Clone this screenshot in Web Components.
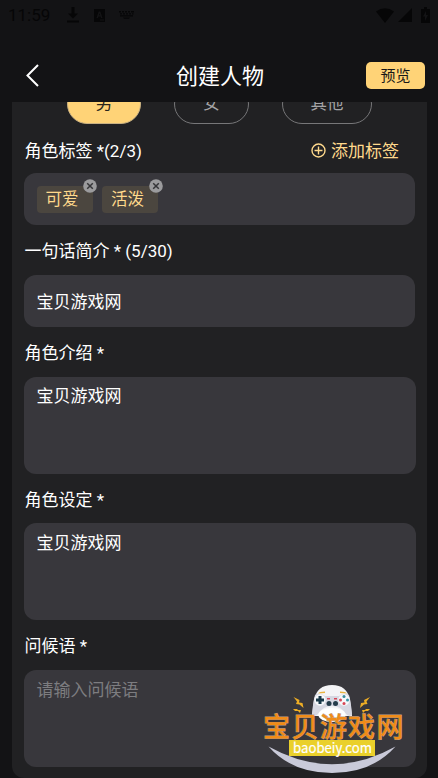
<!DOCTYPE html>
<html lang="zh-CN">
<head>
<meta charset="utf-8">
<title>创建人物</title>
<style>
html,body{margin:0;height:100%;background:#131315;overflow:hidden}
body{font-family:Roboto,"Noto Sans CJK SC",sans-serif;color:#fff}
</style>
</head>
<body>
<create-page></create-page>
<script>
const define = (name, html) => {
  const t = document.createElement('template');
  t.innerHTML = html;
  customElements.define(name, class extends HTMLElement {
    constructor() {
      super();
      this.attachShadow({mode: 'open'}).append(t.content.cloneNode(true));
    }
  });
};

define('status-bar', `
<style>
:host{display:flex;height:30px;box-sizing:border-box;padding:0 6px 0 8px;align-items:center;color:#060607;font-size:17px;line-height:30px}
.time{width:59px}
svg{display:block;fill:currentColor}
.space{flex:1}
</style>
<span class="time">11:59</span>
<svg width="12" height="16" viewBox="0 0 12 16"><path d="M4.500 0h3v6.500H11L6 11.500 1 6.500h3.500zM0 13.500h12v2H0z"/></svg>
<svg style="margin-left:15px" width="11" height="13" viewBox="0 0 11 13"><path fill-rule="evenodd" d="M0 0h11v13H0zM4.700 2.500 2.500 9H4L4.500 7.500H6.500L7 9H8.500L6.300 2.500zM4.900 6.200 5.500 4.300 6.100 6.200zM6 10.500v1h4v-1z"/></svg>
<svg style="margin-left:14px" width="15" height="10" viewBox="0 0 15 10"><path d="M0 1h2v1.500H0zm3 0h2v1.500H3zm3 0h2v1.500H6zm3 0h2v1.500H9zm3 0h3v1.500h-3zM1 3.200h2v1.300H1zm3 0h2v1.300H4zm3 0h2v1.300H7zm3 0h2v1.300h-2zm3 0h1.500v1.300H13zM1 5.200h13v1.300H1zM4 7.500h7l-1 1.200H5z"/></svg>
<span class="space"></span>
<svg width="18" height="15" viewBox="0 0 18 15"><path d="M0 3.500Q9-3 18 3.500L9 15z"/></svg>
<svg style="margin-left:4px" width="14" height="14" viewBox="0 0 14 14"><path d="M14 0v14H0z"/></svg>
<svg style="margin:0 2px 0 9px" width="9" height="16" viewBox="0 0 9 16"><path fill-rule="evenodd" d="M3 0h3v2h3v14H0V2h3zM5 4 2 9.500h2V14l3-6H5z"/></svg>
`);

define('app-header', `
<style>
:host{display:grid;grid-template-columns:73px 1fr 60px;align-items:center;height:72px;box-sizing:border-box;padding:19px 13px 0 26px}
h1{margin:2px 0 0;padding:0 33px 0 9px;font-size:22px;font-weight:400;line-height:30px;text-align:center;white-space:nowrap}
svg{display:block}
button{justify-self:end;width:59px;height:27px;border:0;border-radius:5px;background:#ffd377;color:#171717;padding:0;font:15px/27px Roboto,"Noto Sans CJK SC",sans-serif}
button slot{display:block;padding-top:1px}
</style>
<svg width="13" height="23" viewBox="0 0 13 23" fill="none" stroke="#fff" stroke-width="2"><path d="M12 1 1.500 11.500 12 22"/></svg>
<h1><slot></slot></h1>
<button><slot name="action"></slot></button>
`);

define('choice-pill', `
<style>
:host{display:block;box-sizing:border-box;height:40px;border:1px solid #777779;border-radius:20px;text-align:center;font-size:16.500px;line-height:38px;color:#a5a5a7}
:host([selected]){background:#ffd377;border-color:#c9b182;color:#29251c}
</style><slot></slot>`);

define('field-label', `
<style>
:host{display:flex;justify-content:space-between;align-items:center;height:var(--h,49px);box-sizing:border-box;padding:var(--pt,4px) 16px 0 .5px;font-size:17px;line-height:25px;color:#fff;white-space:pre}
</style><span><slot></slot></span><slot name="action"></slot>`);

define('add-action', `
<style>
:host{display:flex;align-items:center;gap:5px;color:#ffd98c}
svg{margin-top:-1px}
</style>
<svg width="15" height="15" viewBox="0 0 15 15" fill="none" stroke="currentColor" stroke-width="1.400"><circle cx="7.500" cy="7.500" r="6.500"/><path d="M7.500 3.500v8M3.500 7.500h8"/></svg>
<span><slot></slot></span>`);

define('input-box', `
<style>
:host{display:flex;box-sizing:border-box;height:52px;width:391px;align-items:center;padding:2px 12.500px 0;border-radius:12px;background:#38373c;font-size:17px;line-height:25px;color:#fff}
:host([multiline]){height:97px;width:392px;align-items:flex-start;padding-top:7.500px}
:host([placeholder]){color:#7d7d80}
:host([tags]){gap:9.500px;padding-left:12.500px;padding-top:0}
</style><slot></slot>`);

define('tag-chip', `
<style>
:host{display:block;position:relative;width:56px;height:27px;box-sizing:border-box;padding-left:9px;border-radius:4px;background:#4b463f;color:#ffd98c;font-size:16.500px;line-height:27px}
svg{position:absolute;right:-4.500px;top:-7px}
</style><slot></slot>
<svg width="14" height="14" viewBox="0 0 14 14"><circle cx="7" cy="7" r="6.800" fill="#9b9b9d"/><path d="M4.200 4.200l5.600 5.600M9.800 4.200 4.200 9.800" stroke="#353538" stroke-width="1.500"/></svg>`);

define('site-mark', `
<style>
:host{display:block;width:150px;height:98px}
svg{display:block;overflow:visible}
.name{font:500 27px "Noto Sans CJK SC",sans-serif}
.url{font:400 14px "Noto Sans CJK SC",sans-serif}
</style>
<svg width="150" height="98" viewBox="260 680 150 98">
<path d="M268.500 746.500Q332 782 395.500 746.500Q372 773 332 773Q292 773 268.500 746.500Z" fill="#c9cad9"/>
<path d="M314 700Q317 685 332 685Q347 685 350 700L352 716H312Z" fill="#f4f4f6"/>
<path d="M318 693.500q1-2 7-2v1.500zM347 693.500q-1-2-7-2v1.500z" fill="#e9b33f"/>
<path d="M315 695Q319 692 325 696H339Q345 692 349 695Q351 702 352 714Q350 718 346 714Q341 706 332 706Q323 706 318 714Q314 718 312 714Q313 702 315 695Z" fill="#d7d8e2"/>
<ellipse cx="332" cy="715" rx="13.500" ry="7" fill="#fff"/>
<circle cx="320" cy="700" r="5.700" fill="#f7f8fa"/><circle cx="344" cy="700" r="5.700" fill="#f7f8fa"/>
<path d="M318.500 696h3v2.500h2.500v3h-2.500v2.500h-3v-2.500H316v-3h2.500z" fill="#183848"/>
<circle cx="344" cy="696.500" r="1.500" fill="#398b9b"/><circle cx="340.500" cy="700" r="1.500" fill="#d74655"/><circle cx="347.500" cy="700" r="1.500" fill="#3895a5"/><circle cx="344" cy="703.500" r="1.500" fill="#d74655"/>
<path d="M327 698h3v1.500h-3zm7 0h3v1.500h-3z" fill="#d74655"/>
<circle cx="329" cy="703.500" r="2.500" fill="#263d4b"/><circle cx="335.500" cy="703.500" r="2.500" fill="#263d4b"/>
<path d="M293.500 697l6 3-.5 2.500 3.500.5 1 5-4-3.500-3.500-.5 1-2.500zM370 697l-6 3 .5 2.500-3.500.5-1 5 4-3.500 3.500-.5-1-2.500zM293 709l4 0 1 1 3 0-1 3-2-2-3 0zM370 709l-4 0-1 1-3 0 1 3 2-2 3 0z" fill="#edad25"/>
<text class="name" y="736.500" fill="#f08c18" stroke="#b89f88" stroke-width=".8" paint-order="stroke" x="263 291.500 320 348 376.500">宝贝游戏网</text>
<rect x="289" y="740" width="86" height="16" fill="#ead02b"/>
<text class="url" x="293" y="752.500" textLength="79" lengthAdjust="spacingAndGlyphs" fill="#fff" stroke="#fff" stroke-width=".2">baobeiy.com</text>
</svg>`);

define('create-page', `
<style>
:host{display:flex;flex-direction:column;position:relative;width:438px;height:778px;overflow:hidden;background:#131315}
main{flex:1;min-height:0;margin:0 11px 0 12px;padding:0 12px;background:#212123;overflow:hidden;border-radius:0 0 12px 12px}
.pills{display:grid;grid-template-columns:74px 75px 90px;column-gap:33px;padding-left:43px;height:40px;margin-top:-18px}
site-mark{position:absolute;left:260px;top:680px}
</style>
<status-bar></status-bar>
<app-header>创建人物<span slot="action">预览</span></app-header>
<main>
<div class="pills"><choice-pill selected>男</choice-pill><choice-pill>女</choice-pill><choice-pill>其他</choice-pill></div>
<field-label style="--pt:5px">角色标签 *(2/3)<add-action slot="action">添加标签</add-action></field-label>
<input-box tags><tag-chip>可爱</tag-chip><tag-chip>活泼</tag-chip></input-box>
<field-label style="--h:50px;--pt:3px">一句话简介 * (5/30)</field-label>
<input-box>宝贝游戏网</input-box>
<field-label style="--h:49.500px">角色介绍 *</field-label>
<input-box multiline>宝贝游戏网</input-box>
<field-label style="--h:49.500px">角色设定 *</field-label>
<input-box multiline>宝贝游戏网</input-box>
<field-label style="--h:50px;--pt:3px">问候语 *</field-label>
<input-box multiline placeholder>请输入问候语</input-box>
</main>
<site-mark></site-mark>
`);
</script>
</body>
</html>
